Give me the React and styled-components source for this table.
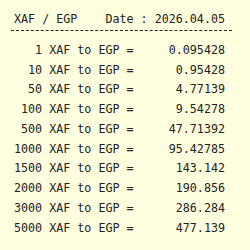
import React from 'react';
import styled, { createGlobalStyle } from 'styled-components';

const GlobalStyle = createGlobalStyle`
  html, body {
    margin: 0;
    padding: 0;
    background: #ffffe0;
  }
`;

const Wrapper = styled.div`
  width: 250px;
  height: 250px;
  box-sizing: border-box;
  padding: 12px 18px 0 11px;
  font-family: 'DejaVu Sans Mono', monospace;
  font-size: 11.7px;
  color: #222;
  background: #ffffe0;
`;

const Header = styled.div`
  display: flex;
  justify-content: space-between;
  padding: 0 7px 0 3px;
  height: 18px;
  line-height: 14px;
  border-bottom: 1px dashed #222;
`;

const Rows = styled.div`
  display: grid;
  grid-template-columns: 4ch auto 1fr;
  grid-auto-rows: 19.78px;
  align-items: center;
  padding: 9px 7px 0 3px;
`;

const Amount = styled.span`
  text-align: right;
`;

const Label = styled.span`
  white-space: pre;
`;

const Value = styled.span`
  text-align: right;
`;

const rates = [
  ['1', '0.095428'],
  ['10', '0.95428'],
  ['50', '4.77139'],
  ['100', '9.54278'],
  ['500', '47.71392'],
  ['1000', '95.42785'],
  ['1500', '143.142'],
  ['2000', '190.856'],
  ['3000', '286.284'],
  ['5000', '477.139'],
];

export default function App() {
  return (
    <Wrapper>
      <GlobalStyle />
      <Header>
        <span>XAF / EGP</span>
        <span>Date : 2026.04.05</span>
      </Header>
      <Rows>
        {rates.map(([amt, val]) => (
          <React.Fragment key={amt}>
            <Amount>{amt}</Amount>
            <Label> XAF to EGP =</Label>
            <Value>{val}</Value>
          </React.Fragment>
        ))}
      </Rows>
    </Wrapper>
  );
}
